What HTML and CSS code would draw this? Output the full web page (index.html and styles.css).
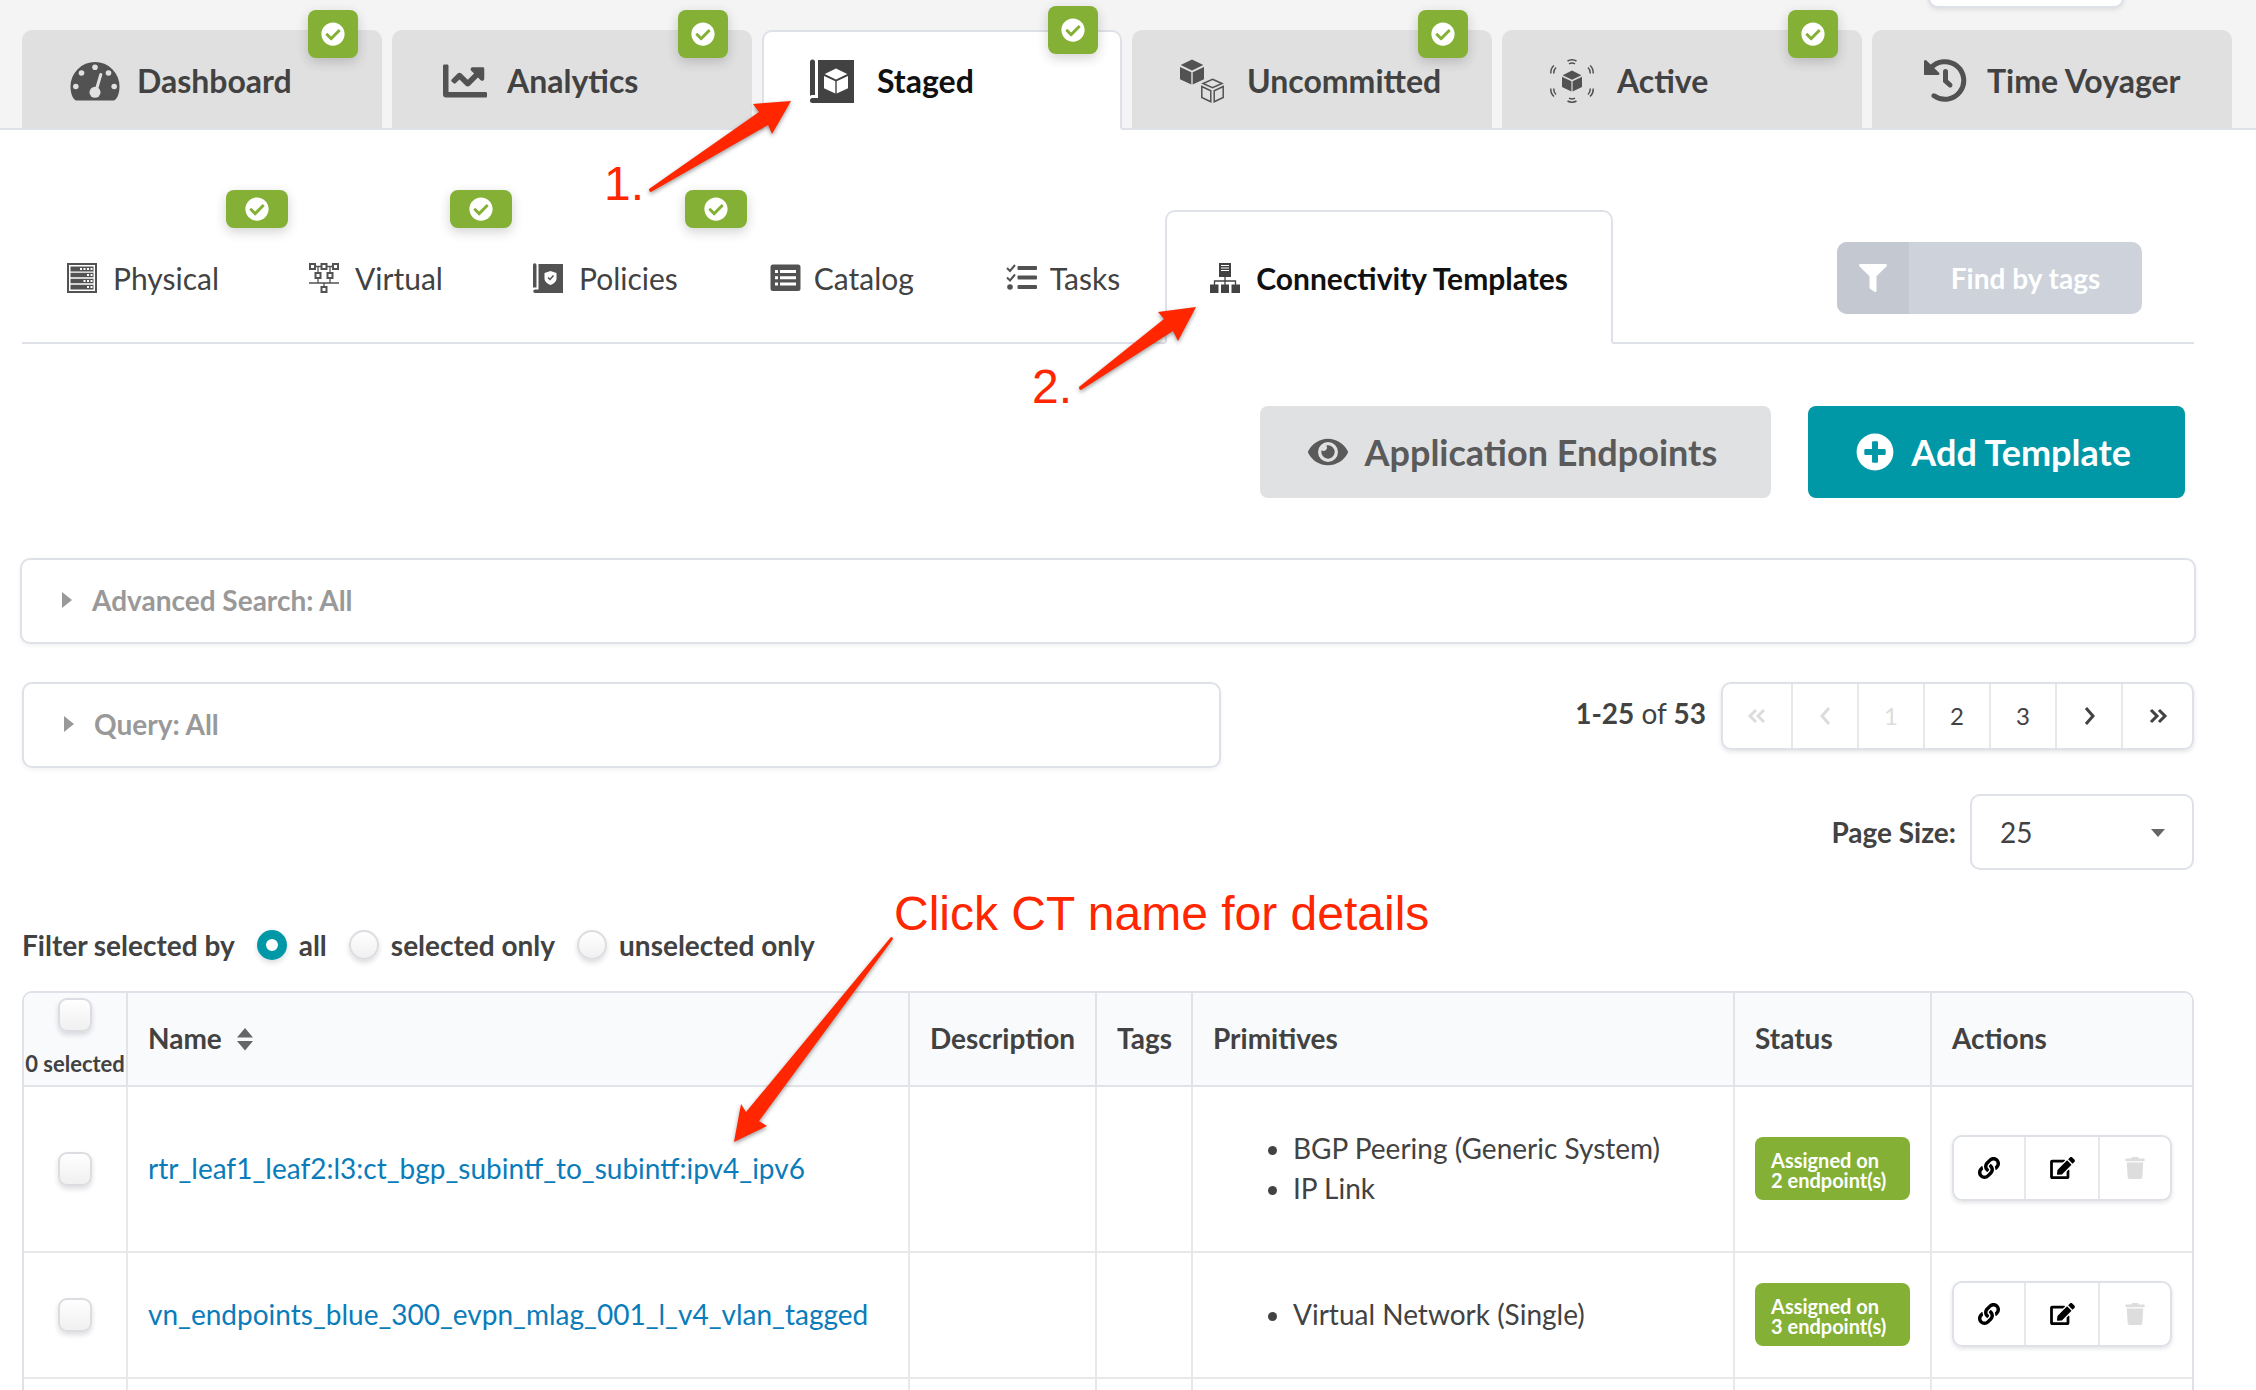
FILE: index.html
```
<!DOCTYPE html>
<html lang="en">
<head>
  <meta charset="UTF-8">
  <meta name="viewport" content="width=device-width, initial-scale=1.0">
  <title>Connectivity Templates</title>
  <link rel="stylesheet" href="styles.css">
</head>
<body>
  <!-- shared icons -->
  <svg class="sprite" aria-hidden="true">
    <symbol id="check" viewBox="0 0 512 512"><path d="M504 256c0 136.967-111.033 248-248 248S8 392.967 8 256 119.033 8 256 8s248 111.033 248 248zM227.314 387.314l184-184c6.248-6.248 6.248-16.379 0-22.627l-22.627-22.627c-6.248-6.249-16.379-6.249-22.628 0L216 308.118l-70.059-70.059c-6.248-6.248-16.379-6.248-22.628 0l-22.627 22.627c-6.248 6.248-6.248 16.379 0 22.627l104 104c6.249 6.249 16.379 6.249 22.628.001z"/></symbol>
    <symbol id="link" viewBox="0 0 512 512"><path d="M326.612 185.391c59.747 59.809 58.927 155.698.36 214.59-.11.12-.24.25-.36.37l-67.2 67.2c-59.27 59.27-155.699 59.262-214.96 0-59.27-59.26-59.27-155.7 0-214.96l37.106-37.106c9.84-9.84 26.786-3.3 27.294 10.606.648 17.722 3.826 35.527 9.69 52.721 1.986 5.822.567 12.262-3.783 16.612l-13.087 13.087c-28.026 28.026-28.905 73.66-1.155 101.96 28.024 28.579 74.086 28.749 102.325.51l67.2-67.19c28.191-28.191 28.073-73.757 0-101.83-3.701-3.694-7.429-6.564-10.341-8.569a16.037 16.037 0 0 1-6.947-12.606c-.396-10.567 3.348-21.456 11.698-29.806l21.054-21.055c5.521-5.521 14.182-6.199 20.584-1.731a152.482 152.482 0 0 1 20.522 17.197zM467.547 44.449c-59.261-59.262-155.69-59.27-214.96 0l-67.2 67.2c-.12.12-.25.25-.36.37-58.566 58.892-59.387 154.781.36 214.59a152.454 152.454 0 0 0 20.521 17.196c6.402 4.468 15.064 3.789 20.584-1.731l21.054-21.055c8.35-8.35 12.094-19.239 11.698-29.806a16.037 16.037 0 0 0-6.947-12.606c-2.912-2.005-6.64-4.875-10.341-8.569-28.073-28.073-28.191-73.639 0-101.83l67.2-67.19c28.239-28.239 74.3-28.069 102.325.51 27.75 28.3 26.872 73.934-1.155 101.96l-13.087 13.087c-4.35 4.35-5.769 10.79-3.783 16.612 5.864 17.194 9.042 34.999 9.69 52.721.509 13.906 17.454 20.446 27.294 10.606l37.106-37.106c59.271-59.259 59.271-155.699.001-214.959z"/></symbol>
    <symbol id="edit" viewBox="0 0 576 512"><path d="M402.6 83.2l90.2 90.2c3.8 3.8 3.8 10 0 13.8L274.4 405.6l-92.8 10.3c-12.4 1.4-22.9-9.1-21.5-21.5l10.3-92.8L388.8 83.2c3.8-3.8 10-3.8 13.8 0zm162-22.9l-48.8-48.8c-15.2-15.2-39.9-15.2-55.2 0l-35.4 35.4c-3.8 3.8-3.8 10 0 13.8l90.2 90.2c3.8 3.8 10 3.8 13.8 0l35.4-35.4c15.2-15.3 15.2-40 0-55.2zM384 346.2V448H64V128h229.8c3.2 0 6.2-1.3 8.5-3.5l40-40c7.6-7.6 2.2-20.5-8.5-20.5H48C21.5 64 0 85.5 0 112v352c0 26.5 21.5 48 48 48h352c26.5 0 48-21.5 48-48V306.2c0-10.7-12.9-16-20.5-8.5l-40 40c-2.2 2.3-3.5 5.3-3.5 8.5z"/></symbol>
    <symbol id="trash" viewBox="0 0 448 512"><path d="M432 32H312l-9.4-18.7A24 24 0 0 0 281.1 0H166.8a23.72 23.72 0 0 0-21.4 13.3L136 32H16A16 16 0 0 0 0 48v32a16 16 0 0 0 16 16h416a16 16 0 0 0 16-16V48a16 16 0 0 0-16-16zM53.2 467a48 48 0 0 0 47.9 45h245.8a48 48 0 0 0 47.9-45L416 128H32z"/></symbol>
    <symbol id="cube" viewBox="0 0 24 26"><path d="M12 0.500L23.300 6 12 11.500 0.700 6zM0 8l11.300 5.300V25.500L0 20.200zM24 8L12.700 13.300V25.500L24 20.200z"/></symbol>
  </svg>

  <div class="page">
    <header class="topbar">
      <div class="topbar-actions"><button type="button" aria-label="Menu"></button></div>
      <nav class="tabs">
        <a href="#" class="tab">
          <svg class="tab-icon" viewBox="0 0 50 44"><path d="M6.500 41.500C4 41.500 0.500 36 0.500 27.500a24.500 24.500 0 0 1 49 0C49.500 36 46 41.500 43.500 41.500z"/><g class="tab-hole"><circle cx="5.800" cy="27.500" r="2.800"/><circle cx="11.500" cy="14" r="2.800"/><circle cx="25" cy="8.200" r="2.800"/><circle cx="38.500" cy="14" r="2.800"/><circle cx="44.200" cy="27.500" r="2.800"/><circle cx="25" cy="33.300" r="5.500"/><path class="needle" d="M30.800 15.500L26 32"/></g></svg>
          Dashboard
          <span class="badge"><svg><use href="#check"/></svg></span>
        </a>
        <a href="#" class="tab">
          <svg class="tab-icon" viewBox="-34 0 580 512"><path d="M496 384H64V80c0-8.840-7.160-16-16-16H16C7.160 64 0 71.160 0 80v336c0 17.670 14.330 32 32 32h464c8.840 0 16-7.160 16-16v-32c0-8.840-7.160-16-16-16zM464 96H345.940c-21.380 0-32.090 25.850-16.970 40.970l32.400 32.400L288 242.750l-73.370-73.370c-12.500-12.500-32.760-12.500-45.250 0l-68.690 68.690c-6.250 6.250-6.250 16.380 0 22.630l22.620 22.620c6.250 6.250 16.380 6.250 22.630 0L192 237.250l73.370 73.370c12.500 12.500 32.760 12.500 45.250 0l96-96 32.400 32.400c15.120 15.120 40.970 4.410 40.970-16.970V112c.010-8.840-7.150-16-15.990-16z"/></svg>
          Analytics
          <span class="badge"><svg><use href="#check"/></svg></span>
        </a>
        <a href="#" class="tab active">
          <svg class="tab-icon" viewBox="0 0 50 44"><path d="M8 1h36v43H2.500a2.500 2.500 0 0 1 0-5H8zM0 3a2.500 2.500 0 0 1 5 0v33H2a4 4 0 0 0-2 1z"/><path class="tab-line" d="M6.500 0v37"/><use class="tab-hole" href="#cube" x="14" y="9" width="24" height="26"/></svg>
          Staged
          <span class="badge"><svg><use href="#check"/></svg></span>
        </a>
        <a href="#" class="tab">
          <svg class="tab-icon" viewBox="0 0 50 44"><use href="#cube" width="24" height="26"/><g class="outline"><path d="M32.500 20.200L42 24.500l-9.500 4.300-9.500-4.300z"/><path d="M21.800 27.500l9 4.200v11l-9-4.200zM43.200 27.500l-9 4.200v11l9-4.200z"/></g></svg>
          Uncommitted
          <span class="badge"><svg><use href="#check"/></svg></span>
        </a>
        <a href="#" class="tab">
          <svg class="tab-icon" viewBox="0 0 50 44"><use href="#cube" x="12" y="11" width="20" height="22"/><g class="outline waves"><path d="M17.500 2q4.500-2.500 9 0M19 4.800q3-1.600 6 0M17.500 42q4.500 2.500 9 0M19 39.200q3 1.600 6 0M4 6.500q-3.500 3-3.200 8M6 8.500q-2.500 2.500-2.200 6M40 6.500q3.500 3 3.200 8M38 8.500q2.500 2.500 2.200 6M4 37.500q-3.500-3-3.200-8M6 35.500q-2.500-2.500-2.200-6M40 37.500q3.500-3 3.200-8M38 35.500q2.500-2.500 2.200-6"/></g></svg>
          Active
          <span class="badge"><svg><use href="#check"/></svg></span>
        </a>
        <a href="#" class="tab">
          <svg class="tab-icon" viewBox="0 0 50 44"><g class="outline history"><path d="M10.500 9.500A18.800 18.800 0 1 1 14 36.800"/><path class="hand" d="M25.500 12.500V22l4.500 4"/></g><path d="M4 2.500c0-1.500 1.500-2 2.500-1L19 13.800c1 1 .500 2.200-1 2.200H5c-.700 0-1-.400-1-1z"/></svg>
          Time Voyager
        </a>
      </nav>
    </header>

    <main>
      <nav class="subtabs">
        <a href="#" class="subtab">
          <svg class="sub-icon" viewBox="0 0 35 30"><path class="frame" d="M1 1h28v28H1z"/><path d="M3.500 3.500h23v5h-23zM3.500 9.700h23v4.500h-23zM3.500 15.700h23v4.500h-23zM3.500 21.800h23v4.700h-23z"/><path class="dots" d="M13 6h13M20 12h6M16.500 18h9.500M20 24h6"/></svg>
          Physical
          <span class="badge"><svg><use href="#check"/></svg></span>
        </a>
        <a href="#" class="subtab">
          <svg class="sub-icon" viewBox="0 0 35 30"><path class="frame" d="M1 1h5v5H1zM12.500 1h5v5h-5zM24 1h5v5h-5zM6.500 10h5v5h-5zM18.500 10h5v5h-5zM12.500 24h5v5h-5z"/><path class="wire" d="M6 3.500h7M18 3.500h6M9 4v6M21 4v6M9 15v5M21 15v5M0 20h30M15 20v4"/></svg>
          Virtual
          <span class="badge"><svg><use href="#check"/></svg></span>
        </a>
        <a href="#" class="subtab">
          <svg class="sub-icon" viewBox="0 0 35 30"><path d="M5.500 1H30v29H2a1.500 1.500 0 0 1 0-3.500h3.500zM0 2a1.500 1.500 0 0 1 3.500 0v22.500H0z"/><path class="tab-hole" d="M17.500 8l6 2v5.500c0 3-3 5.500-6 6.500-3-1-6-3.500-6-6.500V10z"/><path class="outline" d="M15 14.500l2 2 3.500-4"/></svg>
          Policies
          <span class="badge"><svg><use href="#check"/></svg></span>
        </a>
        <a href="#" class="subtab">
          <svg class="sub-icon" viewBox="0 0 35 30"><rect x="2.500" y="1.500" width="30" height="26.500" rx="2.500"/><path class="rows" d="M12 8.500h16M12 14.800h16M12 21h16"/><path class="rows" d="M7 8.500h3M7 14.800h3M7 21h3"/></svg>
          Catalog
        </a>
        <a href="#" class="subtab">
          <svg class="sub-icon" viewBox="0 0 35 30"><rect x="13.500" y="3" width="19.500" height="4" rx="1"/><rect x="13.500" y="12.500" width="19.500" height="4" rx="1"/><rect x="13.500" y="22" width="19.500" height="4" rx="1"/><circle cx="6" cy="24" r="2.800"/><path class="frame" d="M3 5l3 3 5-6M3 14.500l3 3 5-6"/></svg>
          Tasks
        </a>
        <a href="#" class="subtab active">
          <svg class="sub-icon" viewBox="0 0 35 30"><path d="M9 0h12v14H9zM0 21.500h8.500V30H0zM11 21.500h8V30h-8zM21.500 21.500H30V30h-8.500z"/><path class="wire" d="M15 14v8M4.500 22v-4h21v4"/><path class="dots-solid" d="M11 2.500h8M11 5h8M11 7.500h8"/></svg>
          Connectivity Templates
        </a>
        <button type="button" class="find-tags" disabled>
          <span class="find-icon"><svg viewBox="0 0 512 512"><path d="M487.976 0H24.028C2.710 0-8.047 25.866 7.058 40.971L192 225.941V432c0 7.831 3.821 15.170 10.237 19.662l80 55.980C298.020 518.690 320 507.493 320 487.980V225.941l184.947-184.970C520.021 25.896 509.338 0 487.976 0z"/></svg></span>
          <span class="find-text">Find by tags</span>
        </button>
      </nav>

      <div class="actions">
        <button type="button" class="btn">
          <svg class="eye" viewBox="0 0 576 512"><path d="M572.520 241.400C518.290 135.590 410.930 64 288 64S57.680 135.640 3.480 241.410a32.350 32.350 0 0 0 0 29.190C57.710 376.410 165.070 448 288 448s230.320-71.640 284.520-177.410a32.350 32.350 0 0 0 0-29.190zM288 400a144 144 0 1 1 144-144 143.930 143.930 0 0 1-144 144zm0-240a95.310 95.310 0 0 0-25.310 3.790 47.850 47.850 0 0 1-66.900 66.900A95.780 95.780 0 1 0 288 160z"/></svg>
          Application Endpoints
        </button>
        <button type="button" class="btn btn-primary">
          <svg class="plus" viewBox="0 0 512 512"><path d="M256 8C119 8 8 119 8 256s111 248 248 248 248-111 248-248S393 8 256 8zm144 276c0 6.600-5.400 12-12 12h-92v92c0 6.600-5.400 12-12 12h-56c-6.600 0-12-5.400-12-12v-92h-92c-6.600 0-12-5.400-12-12v-56c0-6.600 5.400-12 12-12h92v-92c0-6.600 5.400-12 12-12h56c6.600 0 12 5.400 12 12v92h92c6.600 0 12 5.400 12 12v56z"/></svg>
          Add Template
        </button>
      </div>

      <div class="search-row">
        <button type="button" class="accordion"><span class="caret"></span>Advanced Search: All</button>
      </div>

      <div class="query-row">
        <button type="button" class="accordion query"><span class="caret"></span>Query: All</button>
        <div class="pager">
          <span class="count"><b>1-25</b> of <b>53</b></span>
          <div class="pages">
            <button type="button" class="first" disabled aria-label="First page"><svg viewBox="0 0 24 24"><path d="M11 6l-6 6 6 6M19 6l-6 6 6 6"/></svg></button>
            <button type="button" disabled aria-label="Previous page"><svg viewBox="0 0 24 24"><path d="M16 4l-7 8 7 8"/></svg></button>
            <button type="button" disabled>1</button>
            <button type="button">2</button>
            <button type="button">3</button>
            <button type="button" aria-label="Next page"><svg viewBox="0 0 24 24"><path d="M9 4l7 8-7 8"/></svg></button>
            <button type="button" class="last" aria-label="Last page"><svg viewBox="0 0 24 24"><path d="M5 6l6 6-6 6M13 6l6 6-6 6"/></svg></button>
          </div>
        </div>
      </div>

      <div class="page-size">
        <label for="size">Page Size:</label>
        <div class="select-wrap">
          <select id="size"><option>25</option></select>
        </div>
      </div>

      <div class="filter">
        <span>Filter selected by</span>
        <label><input type="radio" name="filter" checked>all</label>
        <label><input type="radio" name="filter">selected only</label>
        <label><input type="radio" name="filter">unselected only</label>
      </div>

      <table class="templates">
        <thead>
          <tr>
            <th class="col-check"><input type="checkbox" aria-label="Select all"><span class="selected">0 selected</span></th>
            <th class="col-name">Name <svg class="sort" viewBox="0 0 16 24"><path d="M0 10.500L8 1l8 9.500zM0 14h16l-8 9.500z"/></svg></th>
            <th class="col-desc">Description</th>
            <th class="col-tags">Tags</th>
            <th class="col-prim">Primitives</th>
            <th class="col-status">Status</th>
            <th class="col-actions">Actions</th>
          </tr>
        </thead>
        <tbody>
          <tr class="tall">
            <td class="col-check"><input type="checkbox" aria-label="Select row"></td>
            <td><a href="#">rtr_leaf1_leaf2:l3:ct_bgp_subintf_to_subintf:ipv4_ipv6</a></td>
            <td></td>
            <td></td>
            <td><ul><li>BGP Peering (Generic System)</li><li>IP Link</li></ul></td>
            <td><span class="status">Assigned on<br>2 endpoint(s)</span></td>
            <td>
              <div class="row-actions">
                <button type="button" aria-label="Assign"><svg><use href="#link"/></svg></button>
                <button type="button" aria-label="Edit"><svg class="wide"><use href="#edit"/></svg></button>
                <button type="button" aria-label="Delete" disabled><svg><use href="#trash"/></svg></button>
              </div>
            </td>
          </tr>
          <tr>
            <td class="col-check"><input type="checkbox" aria-label="Select row"></td>
            <td><a href="#">vn_endpoints_blue_300_evpn_mlag_001_l_v4_vlan_tagged</a></td>
            <td></td>
            <td></td>
            <td><ul><li>Virtual Network (Single)</li></ul></td>
            <td><span class="status">Assigned on<br>3 endpoint(s)</span></td>
            <td>
              <div class="row-actions">
                <button type="button" aria-label="Assign"><svg><use href="#link"/></svg></button>
                <button type="button" aria-label="Edit"><svg class="wide"><use href="#edit"/></svg></button>
                <button type="button" aria-label="Delete" disabled><svg><use href="#trash"/></svg></button>
              </div>
            </td>
          </tr>
          <tr><td class="col-check"></td><td></td><td></td><td></td><td></td><td></td><td></td></tr>
        </tbody>
      </table>
    </main>

    <!-- callouts drawn over the page -->
    <svg class="notes">
      <path d="M791 101L753 104 759 112 649 189Q649 192 651 192L768 125 772 134z"/>
      <path d="M1196 307L1158 312 1164 319 1079 387Q1079 390 1081 390L1173 331 1178 341z"/>
      <path d="M734 1142L741 1104 746 1112 891 937Q893 937 893 939L759 1121 767 1126z"/>
      <text x="604" y="200">1.</text>
      <text x="1032" y="403">2.</text>
      <text x="894" y="930">Click CT name for details</text>
    </svg>
  </div>
</body>
</html>
```

FILE: styles.css
```
* {
  box-sizing: border-box;
}
body {
  margin: 0;
  background: #fff;
  color: #424242;
  font-family: Lato, "Liberation Sans", sans-serif;
  font-size: 28px;
  line-height: 40px;
}
a {
  color: #0a7cba;
  text-decoration: none;
}
button, select {
  margin: 0;
  padding: 0;
  border: 0;
  background: none;
  color: inherit;
  font: inherit;
}
svg {
  display: block;
  fill: currentColor;
}
.sprite {
  position: absolute;
  width: 0;
  height: 0;
}
.page {
  position: relative;
  height: 100vh;
  overflow: hidden;
}

/* top tabs */
.topbar {
  background: #f4f4f4;
  border-bottom: 2px solid #dee1e7;
}
.topbar-actions {
  display: flex;
  justify-content: flex-end;
  align-items: flex-end;
  height: 8px;
  margin-bottom: 22px;
  padding-right: 132px;
}
.topbar-actions button {
  width: 196px;
  height: 60px;
  background: #fff;
  border: 2px solid #dee1e7;
  border-radius: 10px;
  box-shadow: 0 2px 4px rgba(34, 36, 60, 0.1);
}
.tabs {
  display: flex;
  gap: 10px;
  padding: 0 24px 0 22px;
  margin-bottom: -2px;
}
.tab {
  position: relative;
  flex: 1;
  display: flex;
  align-items: center;
  gap: 17px;
  height: 100px;
  padding: 2px 0 0 46px;
  border: 2px solid #e0e0e0;
  border-bottom-color: #dee1e7;
  border-radius: 10px 10px 0 0;
  background: #e0e0e0;
  color: #424242;
  font-size: 32px;
  font-weight: 700;
}
.tab.active {
  background: #fff;
  border-color: #dee1e7;
  border-bottom-color: #fff;
  color: #111;
}
.tab-icon {
  width: 50px;
  height: 44px;
  color: #525252;
}
.active .tab-icon {
  color: #424242;
}
.tab-hole {
  fill: #e0e0e0;
}
.active .tab-hole,
.subtab .tab-hole {
  fill: #fff;
}
.needle {
  stroke: #e0e0e0;
  stroke-width: 3;
  stroke-linecap: round;
}
.tab-line {
  stroke: #fff;
  stroke-width: 2;
}
.outline {
  fill: none;
  stroke: currentColor;
  stroke-width: 1.500;
}
.history {
  stroke-width: 5;
  stroke-linecap: round;
}
.badge {
  position: absolute;
  top: -22px;
  right: 22px;
  display: flex;
  align-items: center;
  justify-content: center;
  width: 50px;
  height: 48px;
  border-radius: 8px;
  background: #84b135;
  color: #fff;
  box-shadow: 0 4px 12px rgba(34, 36, 38, 0.2);
}
.active .badge {
  top: -26px;
}
.badge svg {
  width: 24px;
  height: 24px;
}

/* second level tabs */
main {
  padding: 80px 62px 0 22px;
}
.subtabs {
  display: flex;
  height: 134px;
  border-bottom: 2px solid #dee1e7;
}
.subtab {
  position: relative;
  display: flex;
  align-items: center;
  gap: 11px;
  height: 134px;
  padding: 2px 43px 0;
  border: 2px solid transparent;
  color: #424242;
  font-size: 30px;
  white-space: nowrap;
}
.subtab.active {
  border-color: #dee1e7;
  border-bottom-color: #fff;
  border-radius: 10px 10px 0 0;
  background: #fff;
  color: #111;
  font-weight: 700;
}
.sub-icon {
  width: 35px;
  height: 30px;
  color: #525252;
}
.active .sub-icon {
  color: #424242;
}
.subtab .badge {
  right: -26px;
  width: 62px;
  height: 38px;
}
.frame {
  fill: none;
  stroke: currentColor;
  stroke-width: 2;
}
.wire {
  fill: none;
  stroke: currentColor;
  stroke-width: 1.300;
}
.dots {
  fill: none;
  stroke: #fff;
  stroke-width: 2;
  stroke-dasharray: 2 1.500;
}
.dots-solid {
  stroke: #fff;
  stroke-width: 1;
}
.rows {
  stroke: #fff;
  stroke-width: 3;
}
.find-tags {
  display: flex;
  align-items: center;
  align-self: center;
  width: 305px;
  height: 72px;
  margin: 4px 52px 0 auto;
  overflow: hidden;
  border-radius: 10px;
  background: #cdd2db;
  color: #fff;
  font-weight: 700;
}
.find-icon {
  display: flex;
  align-items: center;
  justify-content: center;
  width: 72px;
  height: 72px;
  background: #c3c8d1;
}
.find-icon svg {
  width: 28px;
  height: 28px;
}
.find-text {
  flex: 1;
}

/* main buttons */
.actions {
  display: flex;
  justify-content: flex-end;
  gap: 37px;
  padding: 62px 9px 60px 0;
}
.btn {
  display: flex;
  align-items: center;
  gap: 17px;
  height: 92px;
  padding: 0 54px 0 48px;
  border-radius: 8px;
  background: #e0e1e2;
  color: #5a5a5a;
  font-size: 36px;
  font-weight: 700;
}
.btn-primary {
  background: #0097a7;
  color: #fff;
}
.eye {
  width: 40px;
  height: 36px;
}
.plus {
  width: 38px;
  height: 38px;
}

.accordion {
  display: flex;
  align-items: center;
  gap: 20px;
  width: 100%;
  height: 86px;
  padding: 0 0 2px 40px;
  border: 2px solid #dee1e7;
  border-radius: 10px;
  box-shadow: 0 2px 4px rgba(34, 36, 60, 0.06);
  color: #999;
  font-weight: 700;
}
.caret {
  border: 8px solid transparent;
  border-left: 10px solid #999;
  border-right: 0;
}
.search-row {
  margin: 0 -2px;
}
.query-row {
  display: flex;
  justify-content: space-between;
  align-items: flex-start;
  margin-top: 38px;
}
.query {
  width: 1199px;
}
.pager {
  display: flex;
  align-items: center;
  gap: 15px;
}
.count {
  margin-bottom: 6px;
}
.pages {
  display: flex;
  height: 68px;
  border: 2px solid #dee1e7;
  border-radius: 10px;
  box-shadow: 0 2px 4px rgba(34, 36, 60, 0.12);
}
.pages button {
  display: flex;
  align-items: center;
  justify-content: center;
  width: 66px;
  border-left: 2px solid #e8e8e8;
  font-size: 24px;
}
.pages .first {
  width: 68px;
  border-left: 0;
}
.pages .last {
  width: 71px;
}
.pages button:disabled {
  color: #dcdcdc;
}
.pages svg {
  width: 24px;
  height: 24px;
  fill: none;
  stroke: currentColor;
  stroke-width: 3;
}

.page-size {
  display: flex;
  justify-content: flex-end;
  align-items: center;
  gap: 14px;
  margin-top: 26px;
  font-weight: 700;
}
.select-wrap {
  position: relative;
  width: 224px;
}
.select-wrap::after {
  content: "";
  position: absolute;
  top: 35px;
  right: 29px;
  border: 7px solid transparent;
  border-top: 8px solid #666;
  border-bottom: 0;
}
select {
  appearance: none;
  width: 100%;
  height: 76px;
  padding: 0 28px;
  border: 2px solid #dee1e7;
  border-radius: 10px;
  font-weight: 400;
}

.filter {
  display: flex;
  align-items: center;
  gap: 22px;
  height: 40px;
  margin: 55px 0 26px;
  font-weight: 700;
}
.filter label {
  display: flex;
  align-items: center;
  gap: 12px;
}
input {
  appearance: none;
  display: block;
  margin: 0;
  border: 2px solid #dcdde0;
  background: linear-gradient(#fff, #f0f0f0);
  box-shadow: 0 3px 5px rgba(34, 36, 60, 0.15);
}
input[type="radio"] {
  width: 30px;
  height: 30px;
  border-radius: 50%;
}
input[type="radio"]:checked {
  border: 9px solid #0097a7;
  background: #fff;
}
input[type="checkbox"] {
  width: 34px;
  height: 34px;
  border-radius: 9px;
}

/* templates table */
.templates {
  width: 100%;
  table-layout: fixed;
  border: 2px solid #dfe1e9;
  border-radius: 10px;
  border-spacing: 0;
  overflow: hidden;
}
th, td {
  height: 126px;
  padding: 0 20px 2px;
  border-left: 2px solid #e8e8e8;
  border-bottom: 2px solid #e8e8e8;
  text-align: left;
}
th {
  height: 94px;
  background: #f9fafc;
  border-color: #e2e3e8;
}
.tall td {
  height: 166px;
}
.col-check {
  width: 102px;
  padding: 0;
  border-left: 0;
}
.col-check input {
  margin: 0 auto;
}
.selected {
  display: block;
  margin-top: 16px;
  font-size: 22px;
  line-height: 32px;
  text-align: center;
  white-space: nowrap;
}
.col-desc { width: 187px; }
.col-tags { width: 96px; }
.col-prim { width: 25%; }
.col-status { width: 197px; }
.col-actions { width: 262px; }
.sort {
  display: inline-block;
  width: 16px;
  height: 24px;
  margin-left: 8px;
  vertical-align: -2px;
  color: #666;
}
ul {
  margin: 0;
  padding-left: 80px;
}
.status {
  display: block;
  padding: 13px 0 10px 16px;
  border-radius: 8px;
  background: #84b135;
  color: #fff;
  font-size: 20px;
  line-height: 20px;
  font-weight: 700;
}
.row-actions {
  display: flex;
  height: 66px;
  border: 2px solid #dee1e7;
  border-radius: 10px;
  box-shadow: 0 2px 4px rgba(34, 36, 60, 0.12);
  color: #000;
}
.row-actions button {
  flex: auto;
  display: flex;
  align-items: center;
  justify-content: center;
}
.row-actions button + button {
  border-left: 2px solid #e8e8e8;
}
.row-actions button:disabled {
  color: #ddd;
}
.row-actions svg {
  width: 22px;
  height: 22px;
}
.row-actions .wide {
  width: 25px;
}

.notes {
  position: absolute;
  top: 0;
  left: 0;
  width: 100%;
  height: 100%;
  fill: #ff2600;
  font-family: "Liberation Sans", Helvetica, Arial, sans-serif;
  font-size: 48px;
  pointer-events: none;
}
.notes path {
  filter: drop-shadow(0 2px 2px rgba(0, 0, 0, 0.4));
}
```
